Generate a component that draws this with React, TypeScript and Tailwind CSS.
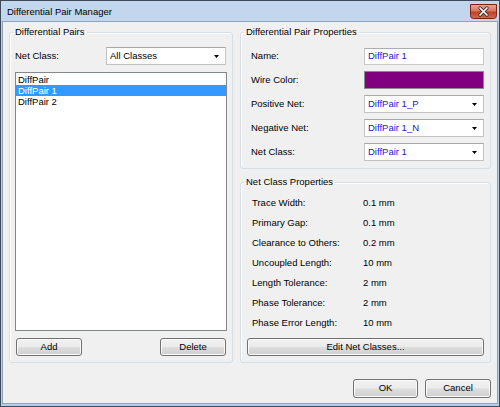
import React from 'react';

const FONT = { fontFamily: '"Liberation Sans", Arial, sans-serif' };

const BTN =
  'flex items-center justify-center rounded-[3px] border border-[#707070] bg-[linear-gradient(to_bottom,#f2f2f2_0%,#ebebeb_48%,#dddddd_52%,#cfcfcf_100%)] shadow-[inset_0_0_0_1px_#fbfbfb] text-black';

function Arrow() {
  return (
    <svg width="5" height="3" viewBox="0 0 5 3" className="shrink-0">
      <path d="M0 0 H5 L2.5 3 Z" fill="#000" />
    </svg>
  );
}

function Combo({ value, blue = false }: { value: string; blue?: boolean }) {
  return (
    <div className="w-[120px] h-[18px] bg-white border border-[#c3c3c3] border-t-[#a9a9a9] flex items-center pl-[3px] pr-[6px]">
      <span className={`flex-1 ${blue ? 'text-[#2020c8]' : 'text-black'}`}>{value}</span>
      <Arrow />
    </div>
  );
}

function Group({ title, className, children }: { title: string; className?: string; children: React.ReactNode }) {
  return (
    <fieldset className={`border border-[#d5dfe5] rounded-[3px] shadow-[inset_1px_1px_0_#ffffff] p-0 m-0 min-w-0 flex flex-col ${className ?? ''}`}>
      <legend className="ml-[3px] px-[2px] leading-[12px]">{title}</legend>
      {children}
    </fieldset>
  );
}

function CloseButton() {
  return (
    <svg width="27" height="15" viewBox="0 0 27 15" className="mt-[3px] shrink-0">
      <defs>
        <linearGradient id="cb" x1="0" y1="0" x2="0" y2="1">
          <stop offset="0" stopColor="#eaa595" />
          <stop offset="0.45" stopColor="#d8775f" />
          <stop offset="0.55" stopColor="#c2402a" />
          <stop offset="1" stopColor="#d46a50" />
        </linearGradient>
      </defs>
      <path d="M0.5 0.5 H26.5 V11.5 Q26.5 14.5 23.5 14.5 H3.5 Q0.5 14.5 0.5 11.5 Z" fill="url(#cb)" stroke="#7a2418" />
      <path d="M10 4 L17 11 M17 4 L10 11" stroke="#4e2620" strokeWidth="3.2" strokeLinecap="round" />
      <path d="M10 4 L17 11 M17 4 L10 11" stroke="#ffffff" strokeWidth="1.7" strokeLinecap="round" />
    </svg>
  );
}

const PAIRS = ['DiffPair', 'DiffPair 1', 'DiffPair 2'];

const PROPS: [string, string][] = [
  ['Trace Width:', '0.1 mm'],
  ['Primary Gap:', '0.1 mm'],
  ['Clearance to Others:', '0.2 mm'],
  ['Uncoupled Length:', '10 mm'],
  ['Length Tolerance:', '2 mm'],
  ['Phase Tolerance:', '2 mm'],
  ['Phase Error Length:', '10 mm'],
];

export default function App() {
  return (
    <div
      className="w-[500px] h-[407px] border border-[#3d4a58] bg-[#b4cde9] flex flex-col text-[9.5px] text-black select-none"
      style={FONT}
    >
      {/* Title bar */}
      <div className="h-[20px] shrink-0 flex items-start justify-between pl-[6px] pr-[2px] bg-[#c2d7ee]">
        <span className="mt-[5px] leading-[11px] text-[9.5px]">Differential Pair Manager</span>
        <CloseButton />
      </div>

      {/* Client area */}
      <div className="flex-1 mx-px mb-[2px] border border-[#8fa3ba] bg-[#f0f0f0] flex flex-col pt-[4px] px-[6px] pb-[5px]">
        <div className="h-[337px] flex gap-[7px]">
          {/* Differential Pairs */}
          <Group title="Differential Pairs" className="w-[224px]">
            <div className="flex-1 flex flex-col pt-[9px] pl-[5px] pr-[6px] pb-[6px]">
              <div className="flex items-center justify-between">
                <span>Net Class:</span>
                <Combo value="All Classes" />
              </div>
              <div className="flex-1 mt-[7px] mr-[-1px] bg-white border border-[#828790] pt-px">
                {PAIRS.map((p, i) => (
                  <div
                    key={p}
                    className={`h-[11px] leading-[11px] pl-[2px] ${i === 1 ? 'bg-[#3399ff] text-white' : ''}`}
                  >
                    {p}
                  </div>
                ))}
              </div>
              <div className="mt-[7px] flex justify-between pl-px">
                <button className={`${BTN} w-[66px] h-[18px]`}>Add</button>
                <button className={`${BTN} w-[66px] h-[18px]`}>Delete</button>
              </div>
            </div>
          </Group>

          <div className="w-[251px] flex flex-col gap-[7px]">
            {/* Differential Pair Properties */}
            <Group title="Differential Pair Properties" className="h-[143px]">
              <div className="flex flex-col gap-[6px] pt-[9px] pl-[10px] pr-[6px]">
                <div className="h-[18px] flex items-center justify-between">
                  <span>Name:</span>
                  <div className="w-[120px] h-[17px] bg-white border border-[#c9c9c9] border-t-[#abadb3] flex items-center pl-[3px] text-[#2020c8]">
                    DiffPair 1
                  </div>
                </div>
                <div className="h-[18px] flex items-center justify-between">
                  <span>Wire Color:</span>
                  <div className="w-[120px] h-[18px] bg-[#800080] border border-[#8a8a8a]" />
                </div>
                <div className="h-[18px] flex items-center justify-between">
                  <span>Positive Net:</span>
                  <Combo value="DiffPair 1_P" blue />
                </div>
                <div className="h-[18px] flex items-center justify-between">
                  <span>Negative Net:</span>
                  <Combo value="DiffPair 1_N" blue />
                </div>
                <div className="h-[18px] flex items-center justify-between">
                  <span>Net Class:</span>
                  <Combo value="DiffPair 1" blue />
                </div>
              </div>
            </Group>

            {/* Net Class Properties */}
            <Group title="Net Class Properties" className="flex-1">
              <div className="flex-1 flex flex-col pt-[5px] pl-[11px] pr-[6px] pb-[6px]">
                {PROPS.map(([k, v]) => (
                  <div key={k} className="h-[20px] flex items-center">
                    <span className="w-[111px] shrink-0">{k}</span>
                    <span>{v}</span>
                  </div>
                ))}
                <button className={`${BTN} mt-auto ml-[-5px] h-[18px] w-[237px]`}>Edit Net Classes...</button>
              </div>
            </Group>
          </div>
        </div>

        <div className="mt-auto flex justify-end gap-[7px]">
          <button className={`${BTN} w-[65px] h-[19px] border-[#3c7fb1] shadow-[inset_0_0_0_1px_#93d3f3]`}>OK</button>
          <button className={`${BTN} w-[66px] h-[19px]`}>Cancel</button>
        </div>
      </div>
    </div>
  );
}
